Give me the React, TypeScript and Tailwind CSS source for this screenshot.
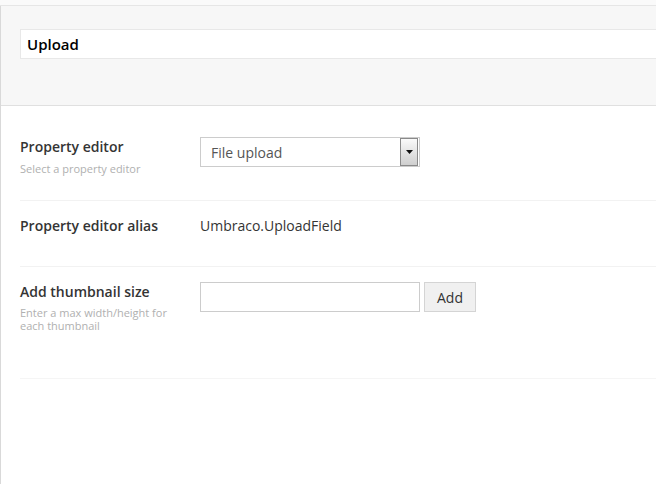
import React from "react";

export default function App() {
  return (
    <div className="w-[656px] h-[484px] overflow-hidden bg-white font-['Open_Sans',sans-serif] text-[#343434]">
      <div className="h-[6px] bg-[#fafafa] border-b border-[#e6e6e6]" />
      <div className="border-l border-[#d9d9d9] h-[478px] flex flex-col">
        <div className="h-[100px] shrink-0 bg-[#f7f7f7] border-b border-[#e0e0e0] pl-[19px] pt-[23px]">
          <div className="h-[30px] bg-white border border-[#e8e8e8] border-r-0 flex items-center pl-[6px] text-[15px] font-semibold text-black">
            Upload
          </div>
        </div>
        <div className="pl-[19px] pt-[16px] flex flex-col">
          <div className="h-[79px] border-b border-[#f2f2f2] flex pt-[15px]">
            <div className="w-[180px] flex flex-col">
              <div className="text-[14px] font-semibold leading-[20px]">Property editor</div>
              <div className="text-[11px] text-[#b0b0b0] leading-[14px] mt-[5px]">Select a property editor</div>
            </div>
            <div className="w-[220px] h-[30px] border border-[#cccccc] flex items-center justify-between pl-[10px] pr-[1px] text-[14px] text-[#555555]">
              <span>File upload</span>
              <div className="w-[18px] h-[28px] border border-[#8a8a8a] bg-gradient-to-b from-[#fafafa] to-[#cfcfcf] flex items-center justify-center">
                <svg width="7" height="4" viewBox="0 0 7 4">
                  <path d="M0 0 L7 0 L3.5 4 Z" fill="#111" />
                </svg>
              </div>
            </div>
          </div>
          <div className="h-[66px] border-b border-[#f2f2f2] flex pt-[15px]">
            <div className="w-[180px] text-[14px] font-semibold leading-[20px]">Property editor alias</div>
            <div className="text-[14px] leading-[20px]">Umbraco.UploadField</div>
          </div>
          <div className="h-[112px] border-b border-[#f5f5f5] flex pt-[15px]">
            <div className="w-[180px] flex flex-col">
              <div className="text-[14px] font-semibold leading-[20px]">Add thumbnail size</div>
              <div className="text-[11px] text-[#b0b0b0] leading-[13px] mt-[4px] w-[155px]">
                Enter a max width/height for each thumbnail
              </div>
            </div>
            <div className="flex gap-[4px]">
              <div className="w-[220px] h-[30px] border border-[#cccccc] bg-white" />
              <button className="w-[52px] h-[30px] border border-[#d4d4d4] bg-[#f0f0f0] text-[14px] text-[#333]">
                Add
              </button>
            </div>
          </div>
        </div>
      </div>
    </div>
  );
}
